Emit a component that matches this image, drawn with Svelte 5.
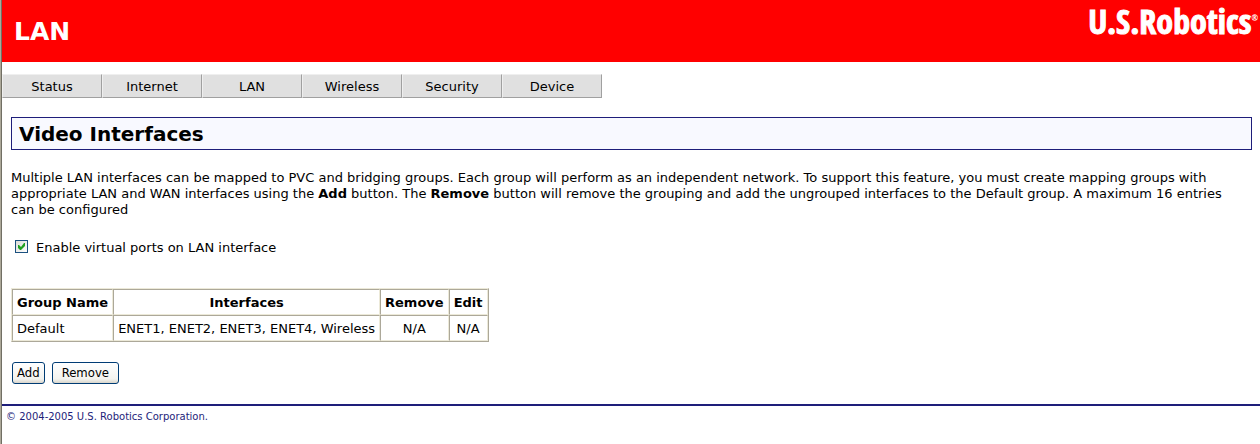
<script>
	let enabled = $state(true);

	const menu = ['Status', 'Internet', 'LAN', 'Wireless', 'Security', 'Device'];
	const groups = [
		{
			name: 'Default',
			interfaces: 'ENET1, ENET2, ENET3, ENET4, Wireless',
			remove: 'N/A',
			edit: 'N/A'
		}
	];
</script>

<div class="page">
	<header>
		<h1>LAN</h1>
		<div class="logo">U.S.Robotics<sup>®</sup></div>
	</header>

	<nav>
		{#each menu as item}
			<a href="#{item.toLowerCase()}">{item}</a>
		{/each}
	</nav>

	<main>
		<h2>Video Interfaces</h2>

		<p>
			Multiple LAN interfaces can be mapped to PVC and bridging groups. Each group will perform as an
			independent network. To support this feature, you must create mapping groups with appropriate
			LAN and WAN interfaces using the <b>Add</b> button. The <b>Remove</b> button will remove the
			grouping and add the ungrouped interfaces to the Default group. A maximum 16 entries can be
			configured
		</p>

		<label class="enable">
			<input type="checkbox" bind:checked={enabled} />
			Enable virtual ports on LAN interface
		</label>

		<table>
			<thead>
				<tr>
					<th>Group Name</th>
					<th>Interfaces</th>
					<th>Remove</th>
					<th>Edit</th>
				</tr>
			</thead>
			<tbody>
				{#each groups as group}
					<tr>
						<td>{group.name}</td>
						<td>{group.interfaces}</td>
						<td class="center">{group.remove}</td>
						<td class="center">{group.edit}</td>
					</tr>
				{/each}
			</tbody>
		</table>

		<div class="buttons">
			<button type="button" class="narrow">Add</button>
			<button type="button">Remove</button>
		</div>
	</main>

	<footer>© 2004-2005 U.S. Robotics Corporation.</footer>
</div>

<style>
	:global(body) {
		margin: 0;
		background: #fff;
	}

	.page {
		box-sizing: border-box;
		min-height: 100vh;
		border-left: 1px solid #aca899;
		box-shadow: inset 1px 0 #716f64;
		padding-left: 1px;
		font-family: Verdana, 'DejaVu Sans', sans-serif;
		font-size: 13px;
		line-height: 16px;
		color: #000;
	}

	header {
		display: flex;
		justify-content: space-between;
		align-items: flex-start;
		box-sizing: border-box;
		height: 62px;
		padding: 3px 2px 0 12px;
		background: #f00;
		color: #fff;
	}

	h1 {
		margin: 13px 0 0;
		font-size: 25px;
		line-height: 31px;
	}

	.logo {
		font-family: 'Open Sans Condensed', 'Liberation Sans Narrow', 'DejaVu Sans Condensed', sans-serif;
		font-size: 34px;
		line-height: 36px;
		font-weight: 700;
		-webkit-text-stroke: 1px #fff;
	}

	.logo sup {
		font-size: 8px;
		line-height: 8px;
		font-weight: 400;
		vertical-align: 13px;
		-webkit-text-stroke: 0;
	}

	nav {
		display: flex;
		margin-top: 12px;
	}

	nav a {
		box-sizing: border-box;
		width: 100px;
		padding: 4px 0 2px;
		border: 1px solid;
		border-color: #efefef #a0a0a0 #a0a0a0 #efefef;
		background: #e0e0e0;
		color: #000;
		text-align: center;
		text-decoration: none;
	}

	main {
		padding: 19px 8px 20px 9px;
	}

	h2 {
		margin: 0;
		padding: 5px 7px 3px;
		border: 1px solid #1e1e7a;
		background: #f8f9ff;
		font-size: 20px;
		line-height: 23px;
	}

	p {
		margin: 20px 0;
		padding-right: 8px;
	}

	.enable {
		display: flex;
		align-items: center;
		gap: 8px;
		padding: 2px 4px;
	}

	input {
		display: grid;
		place-content: center;
		appearance: none;
		box-sizing: border-box;
		width: 13px;
		height: 13px;
		margin: 0 0 3px;
		border: 1px solid #1c5180;
		background: linear-gradient(135deg, #dcdcd7, #fff);
	}

	input:checked::before {
		content: '';
		width: 7px;
		height: 7px;
		background: #21a121;
		clip-path: polygon(0 2px, 1px 2px, 3px 4px, 6px 0, 7px 0, 7px 3px, 3px 7px, 2px 7px, 0 5px);
	}

	table {
		margin-top: 30px;
		border: 1px solid;
		border-color: #ece9d8 #aca899 #aca899 #ece9d8;
		border-spacing: 0;
	}

	th,
	td {
		padding: 5px 4px 3px;
		border: 1px solid;
		border-color: #aca899 #ece9d8 #ece9d8 #aca899;
	}

	.center {
		text-align: center;
	}

	.buttons {
		display: flex;
		gap: 7px;
		margin: 20px 1px 0;
	}

	button {
		height: 22px;
		padding: 0 9px;
		border: 1px solid #003c74;
		border-radius: 3px;
		background: linear-gradient(#fff, #f3f3ef 80%, #d9d5cb);
		color: #000;
		font-family: Tahoma, 'DejaVu Sans Condensed', sans-serif;
		font-size: 13px;
		line-height: 16px;
	}

	button.narrow {
		padding: 0 4px;
	}

	footer {
		padding: 3px 4px;
		border-top: 2px solid #1e1e7a;
		color: #1e1e7a;
		font-size: 10px;
	}
</style>
